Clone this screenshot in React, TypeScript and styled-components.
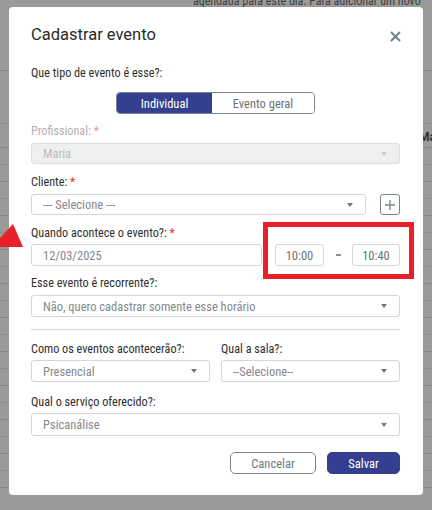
import React from 'react'
import styled, { createGlobalStyle } from 'styled-components'

const GlobalStyle = createGlobalStyle`
  body {
    margin: 0;
    background: #9a9a9a;
    font-family: Roboto, "Liberation Sans", sans-serif;
  }
  * { box-sizing: border-box; }
`

const Screen = styled.div`
  position: relative;
  width: 432px;
  height: 510px;
  overflow: hidden;
  background: #9a9a9a;
`

/* page behind the modal */
const Page = styled.div`
  display: flex;
  flex-direction: column;
`
const Notice = styled.div`
  height: 71px;
  padding: 1px 0 0 193px;
  line-height: 0;
  font-size: 12px;
  font-stretch: 87.5%;
  white-space: nowrap;
  color: #3e3e3e;
  border-bottom: 1px solid #858585;
`
const HeadRow = styled.div`
  height: 53px;
  border-bottom: 1px solid #8c8c8c;
`
const DayRow = styled.div`
  height: 24px;
  display: flex;
  justify-content: flex-end;
  align-items: center;
  padding-top: 2px;
  font-size: 12px;
  font-weight: 700;
  color: #333;
  border-bottom: 1px solid #858585;
  margin-right: -4px;
`
const SlotRow = styled.div`
  height: 34px;
  border-bottom: 1px solid #858585;
`
const SlotHalf = styled.div`
  height: 17px;
  border-bottom: 1px dotted #838383;
`

/* modal */
const Modal = styled.div`
  position: absolute;
  left: 9px;
  top: 7px;
  width: 414px;
  height: 488px;
  background: #fff;
  border-radius: 4px;
  padding: 16px 23px 0 22px;
  font-stretch: 87.5%;
`
const Header = styled.div`
  display: flex;
  justify-content: space-between;
  align-items: center;
  height: 24px;
`
const Title = styled.h2`
  margin: 0;
  font-size: 16.5px;
  font-weight: 400;
  font-stretch: 100%;
  color: #2a2a2a;
  line-height: 24px;
`
const CloseButton = styled.button`
  border: none;
  background: none;
  padding: 2px 0 0;
  margin-right: -1px;
  display: flex;
  color: #6f7985;
`
const Label = styled.div<{ $mt: number; $muted?: boolean }>`
  margin-top: ${p => p.$mt}px;
  font-size: 12.2px;
  line-height: 16px;
  color: ${p => (p.$muted ? '#b0b0b0' : '#2f2f2f')};
`
const Star = styled.span<{ $muted?: boolean }>`
  color: ${p => (p.$muted ? '#f09a9a' : '#e53935')};
`
const Toggle = styled.div`
  margin: 11px auto 0;
  width: fit-content;
  display: flex;
  height: 22px;
  border: 1px solid #7a8490;
  border-radius: 4px;
  overflow: hidden;
`
const ToggleOption = styled.div<{ $active?: boolean; $w: number }>`
  width: ${p => p.$w}px;
  display: flex;
  align-items: center;
  justify-content: center;
  font-size: 12.5px;
  background: ${p => (p.$active ? '#343f91' : '#fff')};
  color: ${p => (p.$active ? '#fff' : '#6b6f75')};
`
const Field = styled.div<{ $mt: number; $h?: number; $disabled?: boolean }>`
  margin-top: ${p => p.$mt}px;
  height: ${p => p.$h ?? 22}px;
  flex: 1;
  min-width: 0;
  display: flex;
  align-items: center;
  padding: 0 12px 0 11px;
  border: 1px solid ${p => (p.$disabled ? '#dedede' : '#d3d6da')};
  border-radius: 3px;
  background: ${p => (p.$disabled ? '#efefef' : '#fff')};
  color: ${p => (p.$disabled ? '#bdbdbd' : '#85888c')};
  font-size: 12.5px;
`
const FieldText = styled.span`
  flex: 1;
  white-space: nowrap;
  overflow: hidden;
`
const Caret = styled.span<{ $light?: boolean }>`
  width: 0;
  height: 0;
  border-left: 3.5px solid transparent;
  border-right: 3.5px solid transparent;
  border-top: 4px solid ${p => (p.$light ? '#c8c8c8' : '#777')};
`
const Row = styled.div<{ $mt: number; $gap: number }>`
  margin-top: ${p => p.$mt}px;
  display: flex;
  align-items: center;
  gap: ${p => p.$gap}px;
`
const AddButton = styled.button`
  width: 20px;
  height: 21px;
  padding: 0;
  border: 1px solid #7a8490;
  border-radius: 3px;
  background: #fff;
  color: #7a8490;
  display: flex;
  align-items: center;
  justify-content: center;
`
const TimeBox = styled.div<{ $w: number }>`
  width: ${p => p.$w}px;
  height: 22px;
  border: 1px solid #d3d6da;
  border-radius: 3px;
  display: flex;
  align-items: center;
  justify-content: center;
  font-size: 12.5px;
  color: #6e7378;
`
const Dash = styled.div`
  width: 28px;
  display: flex;
  justify-content: center;
  &::before {
    content: '';
    width: 5px;
    height: 2px;
    background: #8a8f96;
  }
`
const Divider = styled.hr`
  margin: 12px 0 0;
  border: none;
  border-top: 1px solid #d5d5d5;
`
const Columns = styled.div`
  display: grid;
  grid-template-columns: 1fr 1fr;
  column-gap: 11px;
`
const Footer = styled.div`
  margin-top: 16px;
  display: flex;
  justify-content: flex-end;
  gap: 11px;
`
const Button = styled.button<{ $primary?: boolean; $w: number }>`
  width: ${p => p.$w}px;
  height: 22px;
  border-radius: 5px;
  font-family: inherit;
  font-stretch: inherit;
  font-size: 12.5px;
  border: 1px solid ${p => (p.$primary ? '#343f91' : '#7a8490')};
  background: ${p => (p.$primary ? '#343f91' : '#fff')};
  color: ${p => (p.$primary ? '#fff' : '#6f7985')};
`

/* annotations drawn over the screenshot */
const Highlight = styled.div`
  position: absolute;
  left: 263px;
  top: 222px;
  width: 151px;
  height: 57px;
  border: 5px solid #e8202a;
`
const Arrow = styled.svg`
  position: absolute;
  left: 0;
  top: 224px;
`

const Select: React.FC<{ text: string; mt: number; h?: number; disabled?: boolean }> = ({ text, mt, h, disabled }) => (
  <Field $mt={mt} $h={h} $disabled={disabled}>
    <FieldText>{text}</FieldText>
    <Caret $light={disabled} />
  </Field>
)

export default function App() {
  return (
    <Screen>
      <GlobalStyle />
      <Page>
        <Notice>agendada para este dia. Para adicionar um novo</Notice>
        <HeadRow />
        <DayRow>Ma</DayRow>
        {Array.from({ length: 10 }).map((_, i) => (
          <SlotRow key={i}>
            <SlotHalf />
          </SlotRow>
        ))}
      </Page>

      <Modal>
        <Header>
          <Title>Cadastrar evento</Title>
          <CloseButton>
            <svg width="11" height="11" viewBox="0 0 11 11">
              <path d="M1.5 1.5l8 8M9.5 1.5l-8 8" stroke="currentColor" strokeWidth="1.8" strokeLinecap="round" />
            </svg>
          </CloseButton>
        </Header>

        <Label $mt={18}>Que tipo de evento é esse?:</Label>
        <Toggle>
          <ToggleOption $active $w={95}>Individual</ToggleOption>
          <ToggleOption $w={102}>Evento geral</ToggleOption>
        </Toggle>

        <Label $mt={9} $muted>Profissional: <Star $muted>*</Star></Label>
        <Select text="Maria" mt={4} h={21} disabled />

        <Label $mt={10}>Cliente: <Star>*</Star></Label>
        <Row $mt={4} $gap={14}>
          <Select text="--- Selecione ---" mt={0} h={21} />
          <AddButton>
            <svg width="12" height="12" viewBox="0 0 12 12">
              <path d="M6 1v10M1 6h10" stroke="currentColor" strokeWidth="1.3" />
            </svg>
          </AddButton>
        </Row>

        <Label $mt={10}>Quando acontece o evento?: <Star>*</Star></Label>
        <Row $mt={3} $gap={0}>
          <Field $mt={0} $h={22} style={{ marginRight: 13 }}>
            <FieldText>12/03/2025</FieldText>
          </Field>
          <TimeBox $w={49}>10:00</TimeBox>
          <Dash />
          <TimeBox $w={48}>10:40</TimeBox>
        </Row>

        <Label $mt={9}>Esse evento é recorrente?:</Label>
        <Select text="Não, quero cadastrar somente esse horário" mt={4} />

        <Divider />

        <Columns>
          <div>
            <Label $mt={11}>Como os eventos acontecerão?:</Label>
            <Select text="Presencial" mt={3} />
          </div>
          <div>
            <Label $mt={11}>Qual a sala?:</Label>
            <Select text="--Selecione--" mt={3} />
          </div>
        </Columns>

        <Label $mt={12}>Qual o serviço oferecido?:</Label>
        <Select text="Psicanálise" mt={3} h={23} />

        <Footer>
          <Button $w={86}>Cancelar</Button>
          <Button $primary $w={73}>Salvar</Button>
        </Footer>
      </Modal>

      <Highlight />
      <Arrow width="24" height="25" viewBox="0 0 24 25">
        <polygon points="13,0 23,23 0,23 0,14" fill="#e8202a" />
      </Arrow>
    </Screen>
  )
}
